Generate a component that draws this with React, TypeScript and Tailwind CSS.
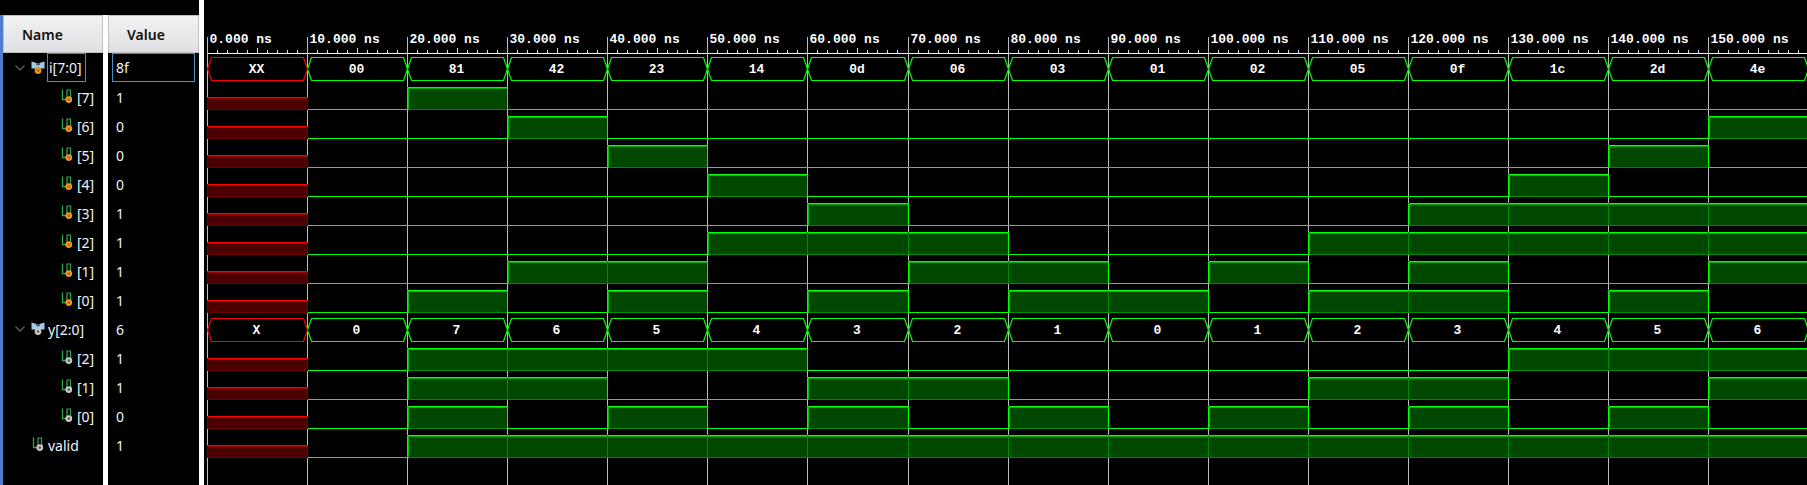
const HIGH = "#00ff00";
const DIM = "#008a00";
const FILL = "#004800";

const gridX = (k: number) => 207 + Math.round(100.08 * k) + 0.5;
const range = (n: number) => Array.from({ length: n }, (_, i) => i);

const iVals = ["00", "81", "42", "23", "14", "0d", "06", "03", "01", "02", "05", "0f", "1c", "2d", "4e"];
const yVals = ["0", "7", "6", "5", "4", "3", "2", "1", "0", "1", "2", "3", "4", "5", "6"];

interface Signal {
  name: string;
  value: string;
  kind: "bus" | "bit";
  tone: "orange" | "gray";
  chevron?: boolean;
  child?: boolean;
  selected?: boolean;
}

const signals: Signal[] = [
  { name: "i[7:0]", value: "8f", kind: "bus", tone: "orange", chevron: true, selected: true },
  ...[7, 6, 5, 4, 3, 2, 1, 0].map((b) => ({
    name: `[${b}]`,
    value: String((0x8f >> b) & 1),
    kind: "bit" as const,
    tone: "orange" as const,
    child: true,
  })),
  { name: "y[2:0]", value: "6", kind: "bus", tone: "gray", chevron: true },
  ...[2, 1, 0].map((b) => ({
    name: `[${b}]`,
    value: String((6 >> b) & 1),
    kind: "bit" as const,
    tone: "gray" as const,
    child: true,
  })),
  { name: "valid", value: "1", kind: "bit", tone: "gray" },
];

// bit waveforms: index 0 is the 10ns segment, x comes before it
const bitRows: Record<number, number[]> = {};
[7, 6, 5, 4, 3, 2, 1, 0].forEach((b, i) => {
  bitRows[i + 1] = iVals.map((v) => (parseInt(v, 16) >> b) & 1);
});
[2, 1, 0].forEach((b, i) => {
  bitRows[i + 10] = yVals.map((v) => (parseInt(v, 10) >> b) & 1);
});
bitRows[13] = yVals.map((_, i) => (i === 0 ? 0 : 1));

const Chevron = () => (
  <svg width="12" height="8" viewBox="0 0 12 8" className="shrink-0">
    <path d="M1.5 1.5 L6 6 L10.5 1.5" fill="none" stroke="#5e5e5e" strokeWidth="1.3" />
  </svg>
);

const Dot = ({ tone, cx, cy }: { tone: string; cx: number; cy: number }) =>
  tone === "orange" ? (
    <>
      <circle cx={cx} cy={cy} r="3.4" fill="#ee9526" />
      <path d={`M${cx - 1.2} ${cy - 1.2} L${cx} ${cy + 1.4} L${cx + 1.2} ${cy - 1.2}`} fill="none" stroke="#8a5512" strokeWidth="0.8" />
    </>
  ) : (
    <>
      <circle cx={cx} cy={cy} r="3.4" fill="#c8c8c8" />
      <circle cx={cx} cy={cy} r="1.3" fill="#5a5a5a" />
    </>
  );

const BusIcon = ({ tone }: { tone: string }) => (
  <svg width="14" height="14" viewBox="0 0 14 14" className="shrink-0">
    <path d="M0.5 0.5 L5.5 2 L5.5 4 L8.5 4 L8.5 2 L13.5 0.5 L13.5 7.5 L9 7.5 L7 6 L5 7.5 L0.5 7.5 Z" fill="#a4cbe6" />
    <path d="M5.5 2 L7 5 L8.5 2 Z" fill="#4f6f86" />
    <Dot tone={tone} cx={7} cy={9.5} />
  </svg>
);

const BitIcon = ({ tone }: { tone: string }) => (
  <svg width="13" height="15" viewBox="0 0 13 15" className="shrink-0">
    <path d="M1.5 0.5 V10.5 H5" fill="none" stroke="#35a548" strokeWidth="1.3" />
    <path d="M6 0.5 V8 M9.5 0.5 V8 M6 1 H9.5" fill="none" stroke="#35a548" strokeWidth="1.2" />
    <Dot tone={tone} cx={7.8} cy={10.6} />
  </svg>
);

const NameRow = ({ s }: { s: Signal }) => (
  <div className={`flex h-[29px] items-center ${s.child ? "pl-[58px]" : s.chevron ? "pl-[11px]" : "pl-[29px]"}`}>
    {s.chevron && (
      <span className="mr-[5px] flex">
        <Chevron />
      </span>
    )}
    {s.kind === "bus" ? <BusIcon tone={s.tone} /> : <BitIcon tone={s.tone} />}
    <span
      className={
        s.selected
          ? "ml-[2px] flex h-[29px] items-center border border-[#4a8fc0] pl-[1px] pr-[3px] text-[#edf4fb]"
          : "ml-[3px] pt-[1px] text-[#edf4fb]"
      }
    >
      {s.name}
    </span>
  </div>
);

const ValueRow = ({ s }: { s: Signal }) => (
  <div
    className={
      s.selected
        ? "ml-[4px] mr-[4px] flex h-[29px] items-center border border-[#4a8fc0] pl-[3px] text-[#edf4fb]"
        : "flex h-[29px] items-center pl-[8px] pt-[1px] text-[#edf4fb]"
    }
  >
    {s.value}
  </div>
);

const HeaderCell = ({ label, pad }: { label: string; pad: string }) => (
  <div
    className={`flex h-[38px] items-center border border-[#c0c0c0] bg-gradient-to-b from-[#f2f2f2] to-[#e0e0e4] font-semibold text-[#111111] ${pad}`}
  >
    {label}
  </div>
);

const TimeAxis = () => (
  <g>
    <g shapeRendering="crispEdges">
      <line x1="207" y1="53.5" x2="1807" y2="53.5" stroke="#f0f0f0" />
      {range(16).map((k) => (
        <g key={k}>
          <line x1={gridX(k)} y1="37" x2={gridX(k)} y2="485" stroke="#bdbdbd" />
          {range(9).map((t) => (
            <line
              key={t}
              x1={gridX(k) + (t + 1) * 10}
              x2={gridX(k) + (t + 1) * 10}
              y1={t === 4 ? 48 : 50}
              y2="53"
              stroke="#e0e0e0"
            />
          ))}
        </g>
      ))}
    </g>
    {range(16).map((k) => (
      <text
        key={k}
        x={gridX(k) + 2}
        y="43"
        fill="#ffffff"
        fontFamily="'Liberation Mono', monospace"
        fontWeight="700"
        fontSize="13"
      >
        {(k * 10).toFixed(3)} ns
      </text>
    ))}
  </g>
);

const BusWave = ({ row, vals, xLabel }: { row: number; vals: string[]; xLabel: string }) => {
  const top = 57.5 + row * 29;
  const bottom = top + 23;
  const mid = top + 11.5;
  const seg = (k: number, color: string, label: string) => {
    const a = gridX(k);
    const b = gridX(k + 1);
    return (
      <g key={k}>
        <path
          d={`M${a} ${mid} L${a + 4} ${top} L${b - 4} ${top} L${b} ${mid} L${b - 4} ${bottom} L${a + 4} ${bottom} Z`}
          fill="#000000"
          stroke={color}
          strokeWidth="1.2"
        />
        <text
          x={(a + b) / 2 - 1}
          y={top + 15.5}
          textAnchor="middle"
          fill="#ffffff"
          fontFamily="'Liberation Mono', monospace"
          fontWeight="700"
          fontSize="13"
        >
          {label}
        </text>
      </g>
    );
  };
  return (
    <g>
      {vals.map((v, i) => seg(i + 1, HIGH, v))}
      {seg(0, "#ff0000", xLabel)}
    </g>
  );
};

const BitWave = ({ row, vals }: { row: number; vals: number[] }) => {
  const low = 109.5 + (row - 1) * 29;
  const high = low - 22;
  return (
    <g shapeRendering="crispEdges">
      <rect x={gridX(0)} y={low - 11} width={gridX(1) - gridX(0)} height="11" fill="#4d0000" stroke="#6e0000" />
      <line x1={gridX(0) - 0.5} x2={gridX(1) + 0.5} y1={low - 12} y2={low - 12} stroke="#ff0000" />
      <line x1={gridX(0)} x2={gridX(1)} y1={low - 11} y2={low - 11} stroke="#a00000" />
      {vals.map((v, i) => {
        const a = gridX(i + 1);
        const b = gridX(i + 2);
        const prev = i === 0 ? 0 : vals[i - 1];
        const next = vals[i + 1];
        if (!v)
          return (
            <g key={i}>
              <line x1={a} x2={b} y1={low} y2={low} stroke={HIGH} />
            </g>
          );
        return (
          <g key={i}>
            <rect x={a} y={high} width={b - a} height={low - high} fill={FILL} stroke={DIM} />
            <line x1={a} x2={b} y1={high} y2={high} stroke={HIGH} />
            <line x1={a} x2={b} y1={high + 1} y2={high + 1} stroke="#00b000" />
            {prev === 0 && <line x1={a} x2={a} y1={high} y2={low} stroke={HIGH} />}
            {prev === 0 && <line x1={a + 1} x2={a + 1} y1={high} y2={low} stroke="#00c000" />}
            {next === 0 && <line x1={b} x2={b} y1={high} y2={low} stroke={HIGH} />}
          </g>
        );
      })}
    </g>
  );
};

const Waveform = () => (
  <svg width="1603" height="485" viewBox="204 0 1603 485" className="block">
    <TimeAxis />
    <BusWave row={0} vals={iVals} xLabel="XX" />
    <BusWave row={9} vals={yVals} xLabel="X" />
    {Object.keys(bitRows).map((r) => (
      <BitWave key={r} row={Number(r)} vals={bitRows[Number(r)]} />
    ))}
  </svg>
);

export default function App() {
  return (
    <div className="flex h-[485px] w-[1807px] overflow-hidden bg-black font-['Noto_Sans',sans-serif] text-[14px]">
      <div className="w-[199px] shrink-0">
        <div className="h-[15px] bg-black" />
        <div className="flex h-[470px]">
          <div className="w-[3px] bg-[#4a7fd0]" />
          <div className="w-[100px]">
            <HeaderCell label="Name" pad="pl-[18px]" />
            {signals.map((s, i) => (
              <NameRow key={i} s={s} />
            ))}
          </div>
          <div className="w-[5px] bg-white" />
          <div className="w-[91px]">
            <HeaderCell label="Value" pad="pl-[18px]" />
            {signals.map((s, i) => (
              <ValueRow key={i} s={s} />
            ))}
          </div>
        </div>
      </div>
      <div className="w-[5px] shrink-0 bg-white" />
      <Waveform />
    </div>
  );
}
